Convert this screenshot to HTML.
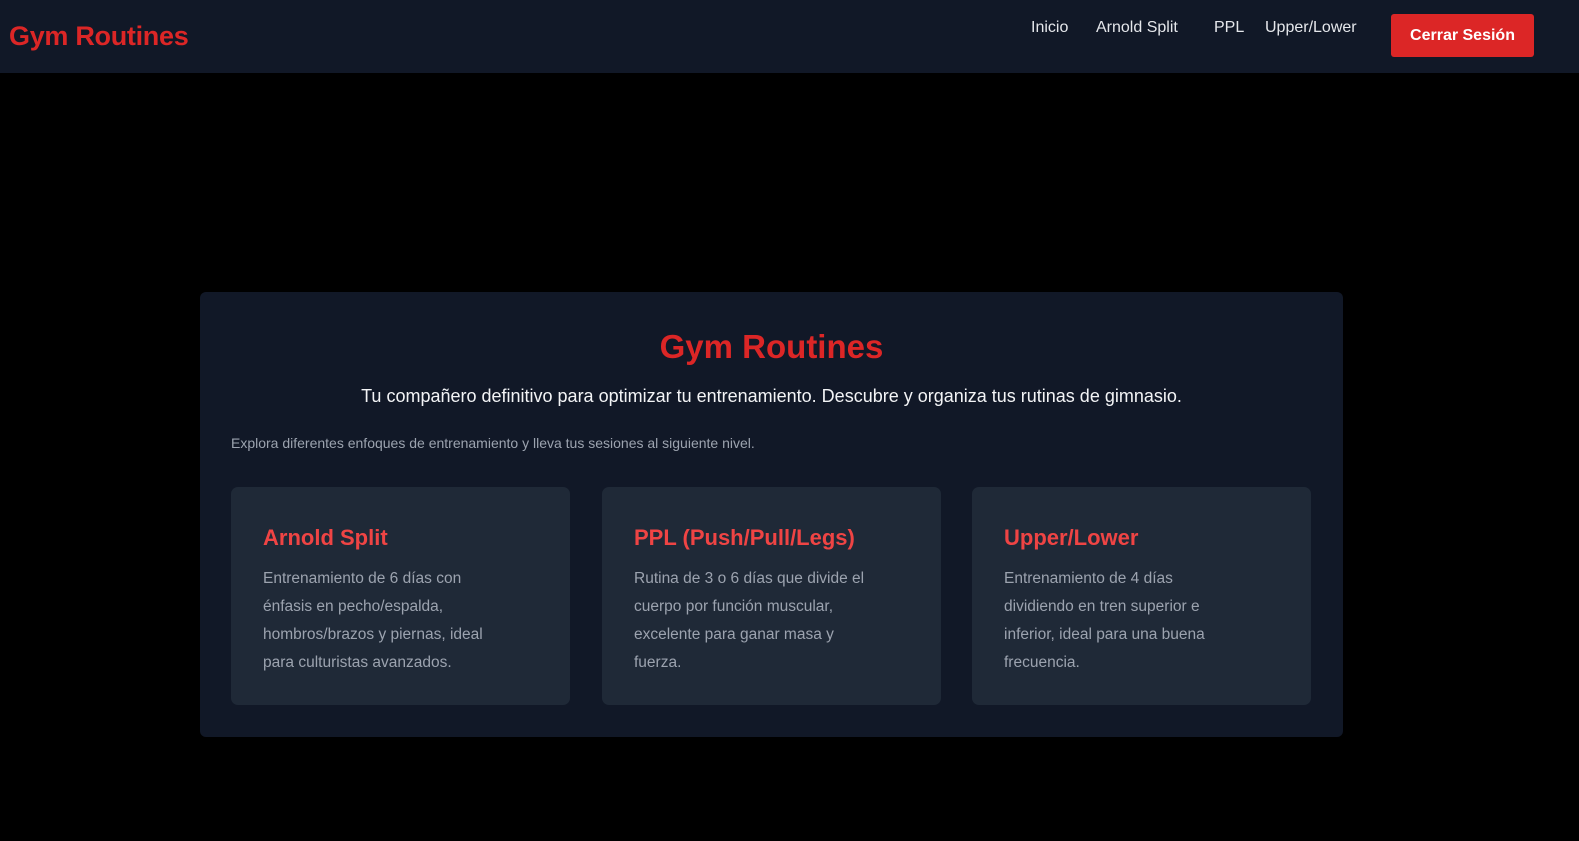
<!DOCTYPE html>
<html><head><meta charset="utf-8"><style>
*{margin:0;padding:0;box-sizing:border-box}
body{width:1579px;height:841px;background:#000;font-family:"Liberation Sans","DejaVu Sans",sans-serif;position:relative;overflow:hidden}
.nav{position:absolute;left:0;top:0;width:1579px;height:73px;background:#111827}
.logo{position:absolute;left:9px;top:21px;color:#dc2626;font-weight:bold;font-size:27px;letter-spacing:-0.3px}
.link{position:absolute;top:19px;color:#e5e7eb;font-size:16px}
.btn{position:absolute;left:1391px;top:14px;width:143px;height:43px;background:#dc2626;border-radius:3px;color:#fff;font-weight:bold;font-size:16px;text-align:center;line-height:43px}
.main{position:absolute;left:200px;top:292px;width:1143px;height:445px;background:#111827;border-radius:6px}
h1{position:absolute;left:0;width:100%;top:36px;text-align:center;color:#dc2626;font-size:33px}
.sub{position:absolute;left:0;width:100%;top:94px;text-align:center;color:#f3f4f6;font-size:18px}
.small{position:absolute;left:31px;top:143px;color:#9ca3af;font-size:14px}
.card{position:absolute;top:195px;width:339px;height:218px;background:#1f2937;border-radius:7px;padding:38px 32px}
.card h3{color:#ef4444;font-size:22px;margin-bottom:14px}
.card p{color:#9ca3af;font-size:15.5px;line-height:28px;width:262px}
</style></head><body>
<div class="nav">
<div class="logo">Gym Routines</div>
<div class="link" style="left:1031px">Inicio</div>
<div class="link" style="left:1096px">Arnold Split</div>
<div class="link" style="left:1214px">PPL</div>
<div class="link" style="left:1265px">Upper/Lower</div>
<div class="btn">Cerrar Sesión</div>
</div>
<div class="main">
<h1>Gym Routines</h1>
<div class="sub">Tu compañero definitivo para optimizar tu entrenamiento. Descubre y organiza tus rutinas de gimnasio.</div>
<div class="small">Explora diferentes enfoques de entrenamiento y lleva tus sesiones al siguiente nivel.</div>
<div class="card" style="left:31px"><h3>Arnold Split</h3><p>Entrenamiento de 6 días con<br>énfasis en pecho/espalda,<br>hombros/brazos y piernas, ideal<br>para culturistas avanzados.</p></div>
<div class="card" style="left:402px"><h3>PPL (Push/Pull/Legs)</h3><p>Rutina de 3 o 6 días que divide el<br>cuerpo por función muscular,<br>excelente para ganar masa y<br>fuerza.</p></div>
<div class="card" style="left:772px"><h3>Upper/Lower</h3><p>Entrenamiento de 4 días<br>dividiendo en tren superior e<br>inferior, ideal para una buena<br>frecuencia.</p></div>
</div>
</body></html>
